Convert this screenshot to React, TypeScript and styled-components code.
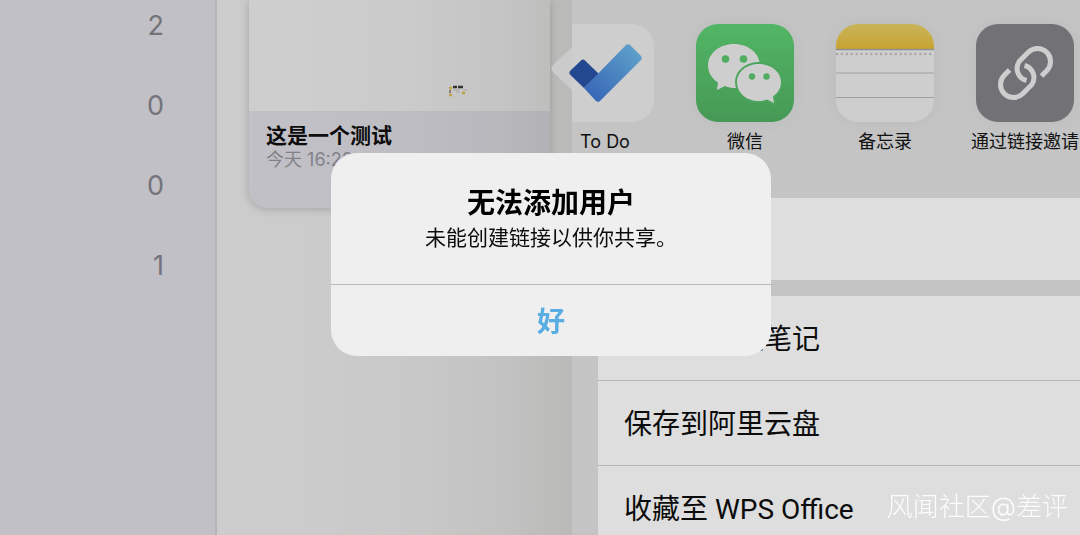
import React from "react";
import styled, { createGlobalStyle } from "styled-components";

const Global = createGlobalStyle`
  *, *::before, *::after { box-sizing: border-box; }
  body {
    margin: 0;
    font-family: Inter, "Noto Sans CJK SC", sans-serif;
    color: #0c0c0c;
    background: #cccccc;
  }
`;

const Page = styled.div`
  display: flex;
  height: 100vh;
  overflow: hidden;
`;

const Sidebar = styled.nav`
  flex: 0 0 217px;
  padding-right: 51px;
  border-right: 2px solid #b5b5b9;
  background: #c1c0c6;
`;

const Counts = styled.ul`
  margin: 0;
  margin-top: -14px;
  padding: 0;
  list-style: none;
`;

const Count = styled.li`
  height: 80px;
  line-height: 80px;
  font-size: 27px;
  text-align: right;
  color: #74737a;
`;

const Notes = styled.main`
  position: relative;
  flex: 0 0 355px;
  padding: 0 22px 0 32px;
  background: #cccccc;
`;

const PanelShade = styled.div`
  position: absolute;
  inset: 0;
  background: linear-gradient(
    to right,
    rgba(20, 20, 10, 0) 20%,
    rgba(20, 20, 10, 0.02) 55%,
    rgba(20, 20, 10, 0.05) 80%,
    rgba(20, 20, 10, 0.1) 100%
  );
`;

const NoteCard = styled.article`
  height: 208px;
  border-radius: 0 0 18px 18px;
  overflow: hidden;
  background: #c1c0c6;
  box-shadow: 0 1px 10px rgba(0, 0, 0, 0.2);
`;

const NotePreview = styled.div`
  display: flex;
  align-items: flex-end;
  justify-content: flex-end;
  height: 111px;
  padding: 0 82px 14px 0;
  background: #cecece;
`;

const NoteInfo = styled.div`
  padding: 13px 17px;
`;

const NoteTitle = styled.h2`
  margin: 0;
  font-size: 21px;
  line-height: 24px;
  font-weight: 700;
`;

const NoteDate = styled.p`
  margin: 0;
  font-size: 18px;
  line-height: 24px;
  color: #838289;
`;

const Share = styled.aside`
  position: relative;
  flex: 1 0 0;
  min-width: 0;
  background: #c4c4c4;
`;

const Pointer = styled.svg`
  position: absolute;
  top: 46px;
  left: -21px;
`;

const Apps = styled.div`
  position: relative;
  display: flex;
  gap: 20px;
  height: 198px;
  margin-left: -27px;
  padding-top: 24px;
`;

const AppButton = styled.button`
  display: flex;
  flex: 0 0 120px;
  flex-direction: column;
  align-items: center;
  padding: 0;
  border: 0;
  background: none;
  font: inherit;
  font-size: 18px;
  line-height: 40px;
  white-space: nowrap;
  color: #111;
`;

const Actions = styled.div`
  margin-left: 26px;
  margin-bottom: 16px;
  background: #dedede;
`;

const Blank = styled.div`
  height: 82px;
`;

const ActionRow = styled.button`
  display: block;
  width: 100%;
  height: 85px;
  padding: 0 26px 2px;
  border: 0;
  border-bottom: 1px solid #b4b4b4;
  background: none;
  font-family: Roboto, "Noto Sans CJK SC", sans-serif;
  font-size: 28px;
  text-align: left;
  white-space: nowrap;
  color: #0c0c0c;
`;

const Overlay = styled.div`
  position: fixed;
  inset: 0;
  display: grid;
  place-items: center;
  padding: 0 0 26px 22px;
`;

const Dialog = styled.section`
  width: 440px;
  border-radius: 26px;
  overflow: hidden;
  background: #efefef;
  text-align: center;
`;

const DialogBody = styled.div`
  height: 132px;
  padding-top: 32px;
  border-bottom: 1px solid #b9b9b9;
`;

const DialogTitle = styled.h1`
  margin: 0;
  font-size: 28px;
  line-height: 36px;
  font-weight: 700;
  color: #000;
`;

const DialogText = styled.p`
  margin: 0;
  font-size: 21px;
  line-height: 34px;
`;

const DialogButton = styled.button`
  display: block;
  width: 100%;
  height: 71px;
  padding: 0 0 2px;
  border: 0;
  background: none;
  font: inherit;
  font-size: 28px;
  font-weight: 700;
  color: #59ade3;
`;

const Watermark = styled.div`
  position: fixed;
  right: 12px;
  bottom: 8px;
  font-size: 26px;
  line-height: 40px;
  font-weight: 300;
  color: rgba(255, 255, 255, 0.9);
`;

const Tile = styled.svg<{ $open?: boolean }>`
  display: block;
  flex: none;
  border-radius: ${(p) => (p.$open ? "0" : "22px")};
  box-shadow: ${(p) => (p.$open ? "none" : "0 0 20px rgba(0, 0, 0, 0.04)")};
`;

const TodoIcon = () => (
  <Tile $open width="98" height="98" viewBox="0 0 98 98" aria-hidden="true">
    <defs>
      <linearGradient id="check" x1="0" y1="1" x2="1" y2="0">
        <stop offset="0.1" stopColor="#3767b7" />
        <stop offset="0.9" stopColor="#5d9fc9" />
      </linearGradient>
    </defs>
    <path d="M16 0H76A22 22 0 0 1 98 22V76A22 22 0 0 1 76 98H16Z" fill="#cecece" />
    <path d="M14 47 L25 36.500 Q27 34.500 29 36.500 L43 50 L28 64 L14 50.500 Q12.500 48.500 14 47Z" fill="#244890" />
    <path d="M28 64 L69.500 21.500 Q72 19 74.500 21.500 L84.500 31.500 Q87 34 84.500 36.500 L44.500 76.500 Q42 79 39.500 76.500Z" fill="url(#check)" />
  </Tile>
);

const WeChatIcon = () => (
  <Tile width="98" height="98" viewBox="0 0 98 98" aria-hidden="true">
    <defs>
      <linearGradient id="green" x1="0" y1="0" x2="0" y2="1">
        <stop offset="0" stopColor="#52b565" />
        <stop offset="1" stopColor="#469955" />
      </linearGradient>
    </defs>
    <rect width="98" height="98" fill="url(#green)" />
    <path d="M38 20C23.500 20 12 29.500 12 41.500C12 48.500 16 54.500 22 58.500L21 66L29 62Q33 64 40 64C53 64 64 54 64 42C64 29.500 52.500 20 38 20Z" fill="#cecece" />
    <path d="M63 40C75.500 40 85 48 85 58C85 64 82 69 77 72.500L78 79L71 75.500Q67 77 63 77C50.500 77 41 69 41 58C41 48 50.500 40 63 40Z" fill="#cecece" stroke="#4ba55c" strokeWidth="4" paintOrder="stroke" />
    <g fill="#4fac60">
      <circle cx="29.500" cy="35" r="3.800" />
      <circle cx="47.500" cy="35" r="3.800" />
      <circle cx="56" cy="52.500" r="3.200" />
      <circle cx="70.500" cy="52.500" r="3.200" />
    </g>
  </Tile>
);

const MemoIcon = () => (
  <Tile width="98" height="98" viewBox="0 0 98 98" aria-hidden="true">
    <defs>
      <linearGradient id="yellow" x1="0" y1="0" x2="0" y2="1">
        <stop offset="0" stopColor="#c8b45a" />
        <stop offset="1" stopColor="#c8a432" />
      </linearGradient>
    </defs>
    <rect width="98" height="98" fill="#cecece" />
    <rect width="98" height="25" fill="url(#yellow)" />
    <path d="M0 25.500H98" stroke="#8e8e8e" strokeWidth="1.500" />
    <path d="M1 30H98" stroke="#a8a8a8" strokeWidth="2.400" strokeLinecap="round" strokeDasharray="0.100 4.800" />
    <path d="M0 49H98M0 73.500H98" stroke="#a0a0a0" strokeWidth="1.200" />
  </Tile>
);

const linkPath = "M65.500 52L70.700 46.700A13 13 0 0 0 52.300 28.300L43.300 37.300A12.500 12.500 0 0 0 50.500 56.500";

const LinkIcon = () => (
  <Tile width="98" height="98" viewBox="0 0 98 98" aria-hidden="true">
    <rect width="98" height="98" fill="#727175" />
    <g fill="none" stroke="#cecece" strokeWidth="5">
      <path d={linkPath} />
      <path d={linkPath} transform="rotate(180 49.500 49)" />
    </g>
  </Tile>
);

const Thumb = () => (
  <svg width="20" height="12" viewBox="0 0 20 12" aria-hidden="true">
    <path d="M5 2h4M10 2h5" stroke="#353330" strokeWidth="2.500" />
    <path d="M1 3h3M1 10h3M14 8h3" stroke="#c2a848" strokeWidth="2.500" />
    <path d="M2 5v3" stroke="#7a6758" strokeWidth="1.500" />
    <path d="M5 5h7M8 7h4M15 5h4" stroke="#adadad" />
  </svg>
);

const apps = [
  { label: "To Do", Icon: TodoIcon },
  { label: "微信", Icon: WeChatIcon },
  { label: "备忘录", Icon: MemoIcon },
  { label: "通过链接邀请", Icon: LinkIcon },
];

export default function App() {
  return (
    <>
      <Global />
      <Page lang="zh-CN">
        <Sidebar>
          <Counts>
            {[2, 0, 0, 1].map((n, i) => (
              <Count key={i}>{n}</Count>
            ))}
          </Counts>
        </Sidebar>
        <Notes>
          <NoteCard>
            <NotePreview>
              <Thumb />
            </NotePreview>
            <NoteInfo>
              <NoteTitle>这是一个测试</NoteTitle>
              <NoteDate>今天 16:22</NoteDate>
            </NoteInfo>
          </NoteCard>
          <PanelShade />
        </Notes>
        <Share>
          <Pointer width="22" height="46" viewBox="0 0 22 46" aria-hidden="true">
            <path d="M22 0L2 19Q-1 22.500 2 26L22 45Z" fill="#cbcbcb" />
          </Pointer>
          <Apps>
            {apps.map(({ label, Icon }) => (
              <AppButton key={label} type="button">
                <Icon />
                {label}
              </AppButton>
            ))}
          </Apps>
          <Actions>
            <Blank />
          </Actions>
          <Actions>
            <ActionRow type="button">添加到快速笔记</ActionRow>
            <ActionRow type="button">保存到阿里云盘</ActionRow>
            <ActionRow type="button">收藏至 WPS Office</ActionRow>
          </Actions>
        </Share>
      </Page>
      <Overlay>
        <Dialog role="alertdialog" aria-labelledby="dialog-title" aria-describedby="dialog-text">
          <DialogBody>
            <DialogTitle id="dialog-title">无法添加用户</DialogTitle>
            <DialogText id="dialog-text">未能创建链接以供你共享。</DialogText>
          </DialogBody>
          <DialogButton type="button">好</DialogButton>
        </Dialog>
      </Overlay>
      <Watermark>风闻社区@差评</Watermark>
    </>
  );
}
